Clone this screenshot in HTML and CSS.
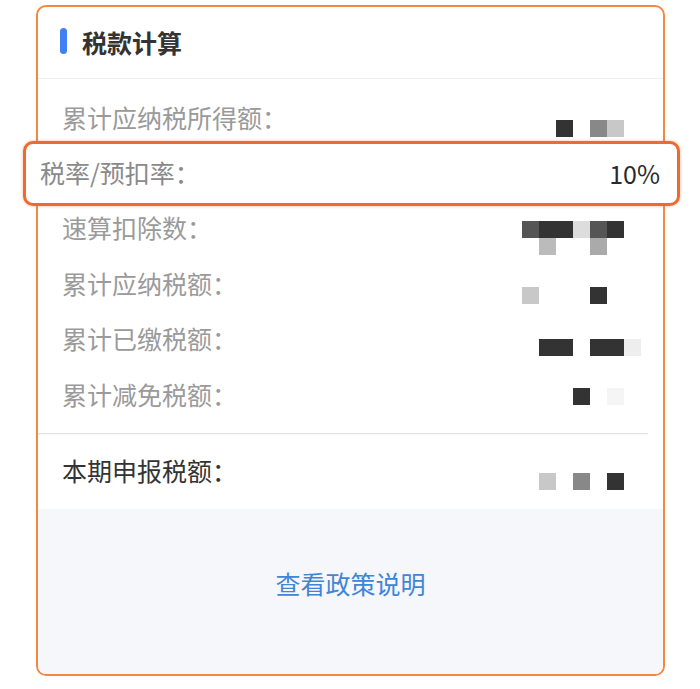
FILE: index.html
```html
<!DOCTYPE html>
<html>
<head>
    <meta charset="utf-8">
    <title>税款计算</title>
    <link rel="stylesheet" href="styles.css">
</head>
<body>
    <div class="card">
        <!-- Cabecera -->
        <div class="card-header">
            <span class="mark"></span>
            <span class="card-title">税款计算</span>
        </div>

        <!-- Filas de datos -->
        <div class="rows">
            <div class="row">
                <span class="label">累计应纳税所得额：</span>
                <div class="mosaic off-30">
                    <i></i><i></i><i class="k3"></i><i></i><i class="k8"></i><i class="kc"></i><i></i>
                </div>
            </div>
            <div class="row row-focus">
                <span class="label">税率/预扣率：</span>
                <span class="value">10%</span>
            </div>
            <div class="row">
                <span class="label">速算扣除数：</span>
                <div class="mosaic off-20">
                    <i class="k5"></i><i class="k3"></i><i class="k3"></i><i class="kd"></i><i class="k5"></i><i class="k3"></i><i></i>
                    <i></i><i class="kb"></i><i></i><i></i><i class="ka"></i><i></i><i></i>
                </div>
            </div>
            <div class="row">
                <span class="label">累计应纳税额：</span>
                <div class="mosaic off-31">
                    <i class="kc"></i><i></i><i></i><i></i><i class="k3"></i><i></i><i></i>
                </div>
            </div>
            <div class="row">
                <span class="label">累计已缴税额：</span>
                <div class="mosaic off-27">
                    <i></i><i class="k3"></i><i class="k3"></i><i></i><i class="k3"></i><i class="k3"></i><i class="ke"></i>
                </div>
            </div>
            <div class="row">
                <span class="label">累计减免税额：</span>
                <div class="mosaic off-21">
                    <i></i><i></i><i></i><i class="k3"></i><i></i><i class="kf"></i><i></i>
                </div>
            </div>
        </div>

        <div class="divider"></div>

        <div class="row row-total">
            <span class="label">本期申报税额：</span>
            <div class="mosaic off-39">
                <i></i><i class="kc"></i><i></i><i class="k8"></i><i></i><i class="k3"></i><i></i>
            </div>
        </div>

        <!-- Pie -->
        <div class="card-footer">
            <a href="#" class="policy-link">查看政策说明</a>
        </div>
    </div>
</body>
</html>
```

FILE: styles.css
```css
body {
    margin: 0;
    padding: 0;
    background: #fff;
    font-family: "Noto Sans CJK SC", "Noto Sans", sans-serif;
}

.card {
    margin: 5px 35px 0 36px;
    border: 2px solid #f6873f;
    border-radius: 10px;
    background: #fff;
}

/* Cabecera */
.card-header {
    display: flex;
    align-items: center;
    height: 71px;
    padding-left: 22px;
    border-bottom: 1px solid #eeeeee;
}
.mark {
    width: 7px;
    height: 26px;
    border-radius: 4px;
    background: #3f80f4;
    margin-right: 15px;
    margin-top: -3px;
}
.card-title {
    font-size: 25px;
    font-weight: bold;
    color: #333;
    margin-top: -2px;
}

/* Filas */
.rows {
    padding-top: 11px;
}
.row {
    display: flex;
    justify-content: space-between;
    align-items: center;
    height: 55.5px;
    padding: 0 22px 0 24px;
}
.label {
    font-size: 25px;
    line-height: 30px;
    color: #9a9a9a;
    margin-top: -2px;
}

.row-focus {
    position: relative;
    height: 59px;
    margin: -5px -17px -5px -15px;
    padding: 0 17px 0 14px;
    border: 3px solid #ee6a2d;
    border-radius: 10px;
    background: #fff;
    box-shadow: 0 0 3px rgba(238, 106, 45, 0.5);
}
.row-focus .label {
    color: #8a8a8a;
}
.value {
    font-size: 25px;
    color: #2a2a2a;
}

.divider {
    height: 1px;
    margin: 10px 15px 0 0;
    background: #e2e2e2;
    box-shadow: 0 1px 1px rgba(0, 0, 0, 0.04);
}

.row-total {
    height: 75px;
}
.row-total .label {
    color: #333;
}

/* Mosaico de valores ocultos */
.mosaic {
    display: grid;
    grid-template-columns: repeat(7, 17px);
    grid-auto-rows: 17px;
    align-self: flex-start;
}
.mosaic i { display: block; }
.k3 { background: #333; }
.k5 { background: #555; }
.k8 { background: #888; }
.ka { background: #aaa; }
.kb { background: #bbb; }
.kc { background: #c8c8c8; }
.kd { background: #ddd; }
.ke { background: #eee; }
.kf { background: #f5f5f5; }

.off-20 { margin-top: 20px; }
.off-21 { margin-top: 21px; }
.off-27 { margin-top: 27px; }
.off-30 { margin-top: 30px; }
.off-31 { margin-top: 31px; }
.off-39 { margin-top: 39px; }

/* Pie */
.card-footer {
    height: 165px;
    background: #f5f7fa;
    border-radius: 0 0 8px 8px;
    text-align: center;
    padding-top: 56px;
    box-sizing: border-box;
}
.policy-link {
    font-size: 25px;
    color: #4285d6;
    text-decoration: none;
}
```
